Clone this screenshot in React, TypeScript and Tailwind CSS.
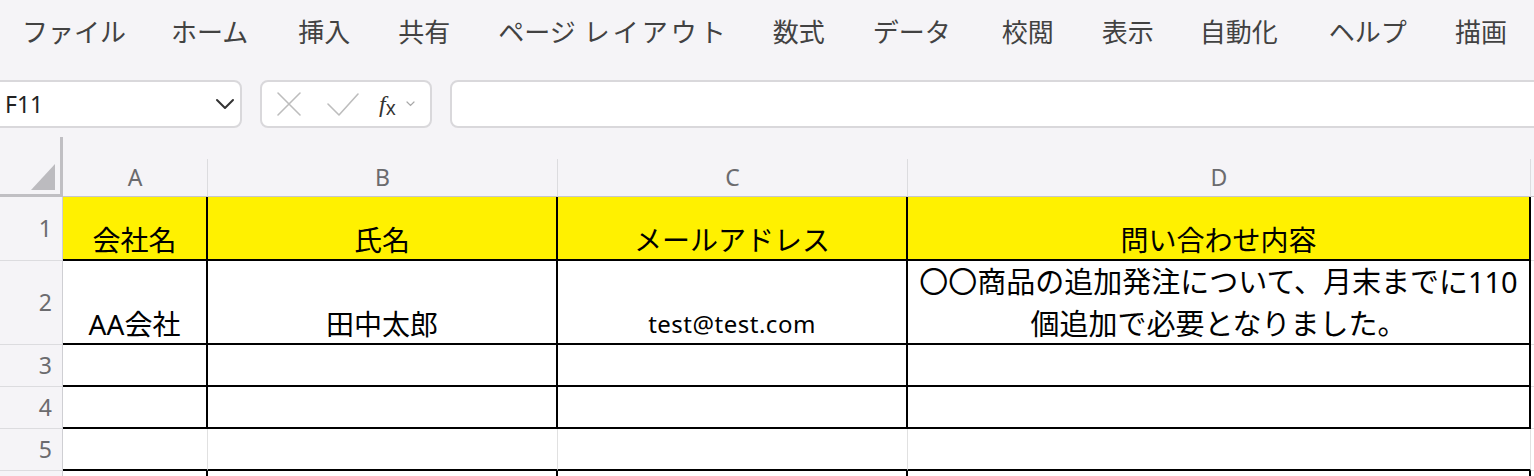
import React from "react";

const menu: { t: string; ml: string }[] = [
  { t: "ファイル", ml: "" },
  { t: "ホーム", ml: "ml-[45px]" },
  { t: "挿入", ml: "ml-[50px]" },
  { t: "共有", ml: "ml-[48px]" },
  { t: "PAGE_LAYOUT", ml: "ml-[48px]" },
  { t: "数式", ml: "ml-[44px]" },
  { t: "データ", ml: "ml-[48px]" },
  { t: "校閲", ml: "ml-[51px]" },
  { t: "表示", ml: "ml-[48px]" },
  { t: "自動化", ml: "ml-[46px]" },
  { t: "ヘルプ", ml: "ml-[51px]" },
  { t: "描画", ml: "ml-[48px]" },
];

const cols = ["A", "B", "C", "D"];

type Cell = React.ReactNode;

function RowHeader({ n, last }: { n?: number; last?: boolean }) {
  return (
    <div
      className={`flex items-center justify-end pr-[10px] text-[23px] text-[#6b6b6e] border-r border-r-[#cfcfd3] ${
        last ? "" : "border-b border-b-[#dcdcdf]"
      }`}
    >
      {n}
    </div>
  );
}

function DataCell({
  children,
  kind,
}: {
  children?: Cell;
  kind: "yellow" | "box" | "plain" | "open";
}) {
  const base =
    "flex flex-col items-center justify-end text-[28px] leading-[42px] text-black whitespace-nowrap overflow-hidden";
  const k =
    kind === "yellow"
      ? "bg-[#fff100] border-r-2 border-b-2 border-black"
      : kind === "box"
      ? "bg-white border-r-2 border-b-2 border-black"
      : kind === "plain"
      ? "bg-white border-r border-r-[#e1e1e1] border-b-2 border-b-black"
      : "bg-white border-r-2 border-black";
  return (
    <div className={`${base} ${k}`}>
      {children ? <div className="relative top-[2px] flex flex-col items-center">{children}</div> : null}
    </div>
  );
}

function ECell({ last }: { last?: boolean }) {
  return <div className={`bg-white ${last ? "" : "border-b border-b-[#e1e1e1]"}`} />;
}

export default function App() {
  return (
    <div className="w-[1534px] h-[476px] overflow-hidden bg-[#f5f4f7] font-['Noto_Sans','Noto_Sans_CJK_JP',sans-serif]">
      {/* Menu bar */}
      <nav className="h-[64px] flex items-center pl-[22px] text-[26px] text-[#424242] whitespace-nowrap">
        {menu.map((m) =>
          m.t === "PAGE_LAYOUT" ? (
            <span key={m.t} className={`${m.ml} flex`}>
              <span>ページ</span>
              <span className="ml-[8px] tracking-[3px]">レイアウト</span>
            </span>
          ) : (
            <span key={m.t} className={m.ml}>
              {m.t}
            </span>
          )
        )}
      </nav>

      {/* Formula bar */}
      <div className="mt-[16px] h-[48px] flex gap-[18px]">
        <div className="ml-[-12px] w-[254px] shrink-0 rounded-[8px] border-2 border-[#d9d8db] bg-white flex items-center pl-[15px] pr-[5px]">
          <span className="text-[23px] text-[#222]">F11</span>
          <svg className="ml-auto" width="20" height="12" viewBox="0 0 20 12" fill="none">
            <path d="M2 2 L10 10 L18 2" stroke="#333" strokeWidth="2" strokeLinecap="round" strokeLinejoin="round" />
          </svg>
        </div>
        <div className="w-[172px] shrink-0 rounded-[8px] border-2 border-[#d9d8db] bg-white flex items-center pl-[14px]">
          <svg width="26" height="26" viewBox="0 0 26 26" fill="none">
            <path d="M2 2 L24 24 M24 2 L2 24" stroke="#bdbdbd" strokeWidth="1.6" strokeLinecap="round" />
          </svg>
          <svg className="ml-[25px]" width="32" height="24" viewBox="0 0 32 24" fill="none">
            <path d="M1 12 L12 23 L31 2" stroke="#bdbdbd" strokeWidth="1.6" strokeLinecap="round" strokeLinejoin="round" />
          </svg>
          <span className="ml-[20px] text-[24px] text-[#333] font-['Liberation_Serif',serif] italic leading-none">
            f<span className="not-italic font-['Noto_Sans',sans-serif] text-[19px] relative top-[3px]">x</span>
          </span>
          <svg className="ml-[10px]" width="9" height="6" viewBox="0 0 9 6" fill="none">
            <path d="M1 1 L4.5 4.5 L8 1" stroke="#a8a8a8" strokeWidth="1.2" strokeLinecap="round" />
          </svg>
        </div>
        <div className="flex-1 mr-[-20px] rounded-[8px] border-2 border-[#d9d8db] bg-white" />
      </div>

      {/* Sheet */}
      <div className="mt-[9px] grid grid-cols-[63px_145px_350px_350px_623px_1fr] grid-rows-[60px_64px_84px_42px_42px_42px_42px]">
        {/* Header row */}
        <div className="border-r-[3px] border-b-[3px] border-[#c0bfc3] flex items-end justify-end pr-[5px] pb-[4px]">
          <svg width="24" height="26" viewBox="0 0 24 26">
            <path d="M24 0 L24 26 L0 26 Z" fill="#bcbbbf" />
          </svg>
        </div>
        {cols.map((c) => (
          <div key={c} className="flex flex-col">
            <div className="h-[22px]" />
            <div className="flex-1 flex items-center justify-center border-r border-r-[#dcdcdf] border-b border-b-[#c6c6ca] text-[23px] text-[#6b6b6e]">
              {c}
            </div>
          </div>
        ))}
        <div className="flex flex-col">
          <div className="h-[22px]" />
          <div className="flex-1 border-b border-b-[#c6c6ca]" />
        </div>

        {/* Row 1 */}
        <RowHeader n={1} />
        <DataCell kind="yellow">会社名</DataCell>
        <DataCell kind="yellow">氏名</DataCell>
        <DataCell kind="yellow">メールアドレス</DataCell>
        <DataCell kind="yellow">問い合わせ内容</DataCell>
        <ECell />

        {/* Row 2 */}
        <RowHeader n={2} />
        <DataCell kind="box">AA会社</DataCell>
        <DataCell kind="box">田中太郎</DataCell>
        <DataCell kind="box">
          <span className="text-[24px] tracking-[0.5px]">test@test.com</span>
        </DataCell>
        <DataCell kind="box">
          <span className="text-[29px]">〇〇商品の追加発注について、月末までに110</span>
          <span className="text-[29px]">個追加で必要となりました。</span>
        </DataCell>
        <ECell />

        {/* Row 3 */}
        <RowHeader n={3} />
        <DataCell kind="box" />
        <DataCell kind="box" />
        <DataCell kind="box" />
        <DataCell kind="box" />
        <ECell />

        {/* Row 4 */}
        <RowHeader n={4} />
        <DataCell kind="box" />
        <DataCell kind="box" />
        <DataCell kind="box" />
        <DataCell kind="box" />
        <ECell />

        {/* Row 5 */}
        <RowHeader n={5} />
        <DataCell kind="plain" />
        <DataCell kind="plain" />
        <DataCell kind="plain" />
        <DataCell kind="plain" />
        <ECell />

        {/* Row 6 */}
        <RowHeader last />
        <DataCell kind="open" />
        <DataCell kind="open" />
        <DataCell kind="open" />
        <DataCell kind="open" />
        <ECell last />
      </div>
    </div>
  );
}
